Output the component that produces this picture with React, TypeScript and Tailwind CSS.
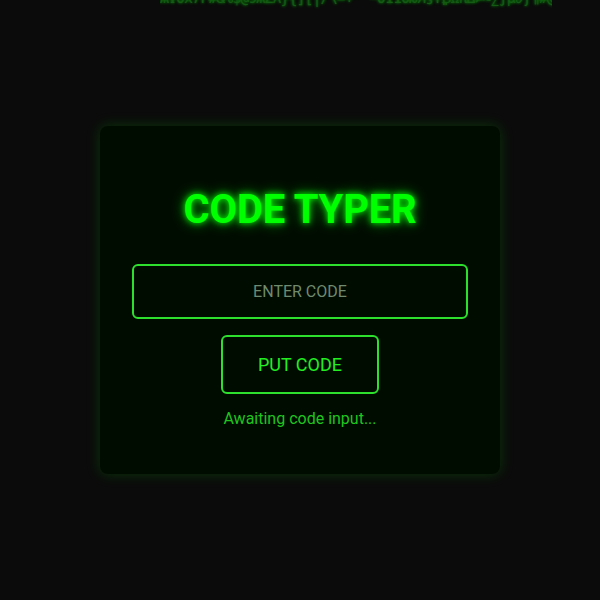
import React, { useState } from 'react';

const RAIN = 'ӁΨ0x7F#&%$@9ЖΣλ}{][|/\\=+*^~0110ЮЯ§¥₿ΩπΔ≠≈∑∫µ∂ƒ¶#@&%$8B3';

const App: React.FC = () => {
  const [code, setCode] = useState('');
  const [status, setStatus] = useState('Awaiting code input...');

  const handlePut = () => {
    setStatus(code ? `Code received: ${code}` : 'Awaiting code input...');
  };

  return (
    <div className="relative w-full h-[600px] overflow-hidden bg-[#0b0b0b] flex items-center justify-center font-['Roboto','Liberation_Sans',sans-serif]">
      {/* matrix rain strip leaking in from the top */}
      <div className="absolute top-[-13px] left-[160px] w-[392px] overflow-hidden whitespace-nowrap text-[15px] font-['DejaVu_Sans_Mono',monospace] text-[#1c8f1c] opacity-60 tracking-[-1px] [text-shadow:0_0_3px_#0f0]">
        {RAIN}
      </div>

      <div className="w-[400px] h-[348px] rounded-lg bg-[#010c01] shadow-[0_0_14px_rgba(0,200,0,0.22)] flex flex-col items-center pt-[62px]">
        <h1 className="text-[40px] leading-[44px] font-bold text-[#00ff00] tracking-[-0.2px] [text-shadow:0_0_6px_#00ff00,0_0_14px_rgba(0,255,0,0.6)]">
          CODE TYPER
        </h1>

        <input
          value={code}
          onChange={e => setCode(e.target.value)}
          placeholder="ENTER CODE"
          className="mt-[32px] w-[336px] h-[55px] rounded-md border-2 border-[#2ee02e] bg-transparent text-center text-[16px] text-[#00ff00] placeholder:text-[#6f8a6f] outline-none"
        />

        <button
          onClick={handlePut}
          className="mt-[16px] w-[158px] h-[59px] rounded-md border-2 border-[#2ee02e] text-[18px] text-[#22ee22] bg-transparent"
        >
          PUT CODE
        </button>

        <p className="mt-[13px] text-[16px] text-[#1fc41f]">{status}</p>
      </div>
    </div>
  );
};

export default App;
